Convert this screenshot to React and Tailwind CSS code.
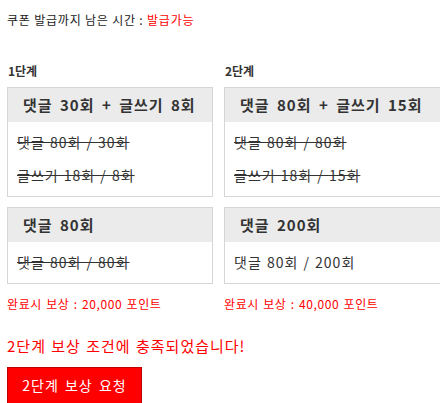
import React from 'react';

const stages = [
  {
    label: '1단계',
    reward: '20,000',
    boxes: [
      {
        title: '댓글 30회 + 글쓰기 8회',
        lines: [
          { text: '댓글 80회 / 30회', done: true },
          { text: '글쓰기 18회 / 8회', done: true },
        ],
      },
      {
        title: '댓글 80회',
        lines: [{ text: '댓글 80회 / 80회', done: true }],
      },
    ],
  },
  {
    label: '2단계',
    reward: '40,000',
    boxes: [
      {
        title: '댓글 80회 + 글쓰기 15회',
        lines: [
          { text: '댓글 80회 / 80회', done: true },
          { text: '글쓰기 18회 / 15회', done: true },
        ],
      },
      {
        title: '댓글 200회',
        lines: [{ text: '댓글 80회 / 200회', done: false }],
      },
    ],
  },
];

function MissionBox({ box }) {
  return (
    <div className="border border-[#d6d6d6] bg-white">
      <div className="h-[34px] bg-[#ebebeb] pl-[15px] flex items-center text-[15px] font-bold text-[#333] tracking-[1px] [word-spacing:3px] whitespace-nowrap">
        {box.title}
      </div>
      <div className="pl-[9px] py-[4px] flex flex-col">
        {box.lines.map((l) => (
          <div
            key={l.text}
            className={`h-[33px] flex items-center text-[14px] text-[#333] tracking-[1px] [word-spacing:1px] whitespace-nowrap ${l.done ? 'line-through' : ''}`}
          >
            {l.text}
          </div>
        ))}
      </div>
    </div>
  );
}

export default function App() {
  return (
    <div
      className="w-[440px] h-[403px] overflow-hidden bg-white text-[#222]"
      style={{ fontFamily: '"Noto Sans CJK KR", "Noto Sans", sans-serif' }}
    >
      <div className="pl-[7px] pt-[11px]">
        <div className="h-[18px] flex items-center text-[12px] tracking-[0.8px] whitespace-nowrap">
          쿠폰 발급까지 남은 시간 :&nbsp;<span className="text-[#ff0000]">발급가능</span>
        </div>

        <div className="mt-[34px] flex gap-[11px] w-[470px]">
          {stages.map((s, i) => (
            <div key={s.label} className={i === 0 ? 'w-[206px] shrink-0' : 'w-[240px] shrink-0'}>
              <div className="h-[16px] flex items-center pl-[1px] text-[12px] font-bold text-[#333]">
                {s.label}
              </div>
              <div className="mt-[8px] flex flex-col gap-[10px]">
                {s.boxes.map((b) => (
                  <MissionBox key={b.title} box={b} />
                ))}
              </div>
              <div className="mt-[12px] h-[16px] flex items-center text-[12px] text-[#ff0000] tracking-[0.6px] [word-spacing:1px] whitespace-nowrap">
                완료시 보상 : {s.reward} 포인트
              </div>
            </div>
          ))}
        </div>

        <div className="mt-[24px] h-[20px] flex items-center text-[15px] text-[#ff0000] tracking-[1px] [word-spacing:1px] whitespace-nowrap">
          2단계 보상 조건에 충족되었습니다!
        </div>

        <button
          type="button"
          className="mt-[11px] w-[135px] h-[37px] bg-[#ff0000] border border-[#c00000] text-white text-[14px] tracking-[1px] [word-spacing:2px] flex items-center justify-center"
        >
          2단계 보상 요청
        </button>
      </div>
    </div>
  );
}
